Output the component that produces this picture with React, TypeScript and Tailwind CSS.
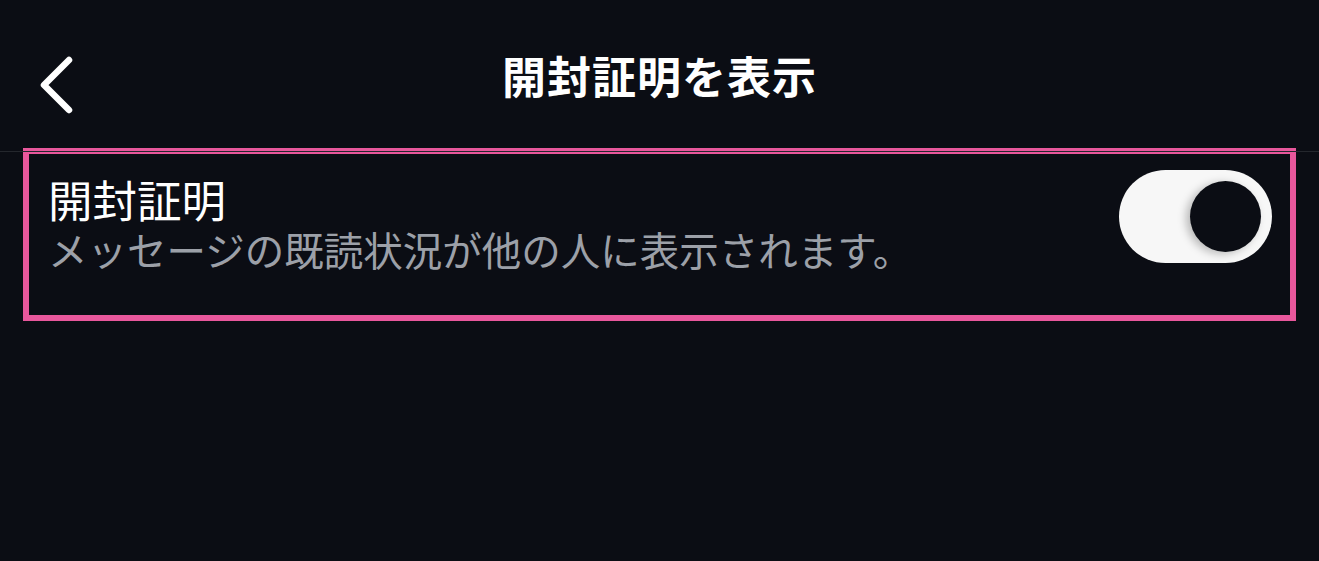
export default function App() {
  return (
    <div
      className="w-[1319px] h-[561px] bg-[#0b0d14] overflow-hidden text-white"
      style={{ fontFamily: '"Noto Sans CJK JP", "Noto Sans", sans-serif' }}
    >
      {/* Header */}
      <header className="relative h-[152px] border-b border-[#24272d] flex items-center justify-center">
        <button className="absolute left-[36px] top-[55px] w-[40px] h-[60px] flex items-center justify-center">
          <svg width="36" height="60" viewBox="0 0 36 60" fill="none">
            <path d="M31 5 L6 30 L31 55" stroke="white" strokeWidth="6.5" strokeLinecap="round" strokeLinejoin="round" />
          </svg>
        </button>
        <h1 className="text-[44px] font-bold leading-none tracking-[1px] -mt-[2px]">開封証明を表示</h1>
      </header>

      {/* Read receipts row */}
      <section className="mx-[23px] -mt-[4px] h-[173px] border-[6px] border-[#e8579c] flex items-center justify-between pl-[19px] pr-[18px]">
        <div className="flex flex-col -mt-[26px]">
          <span className="text-[44.5px] leading-[54px]">開封証明</span>
          <span className="text-[39.5px] leading-[46px] text-[#9ca0a8]">メッセージの既読状況が他の人に表示されます。</span>
        </div>
        <div className="w-[153px] h-[93px] rounded-full bg-[#f7f7f7] flex items-center justify-end pr-[11px] -mt-[36px]">
          <div className="w-[71px] h-[71px] rounded-full bg-[#0b0d14] shadow-[-4px_2px_8px_rgba(0,0,0,0.25)]" />
        </div>
      </section>
    </div>
  );
}
